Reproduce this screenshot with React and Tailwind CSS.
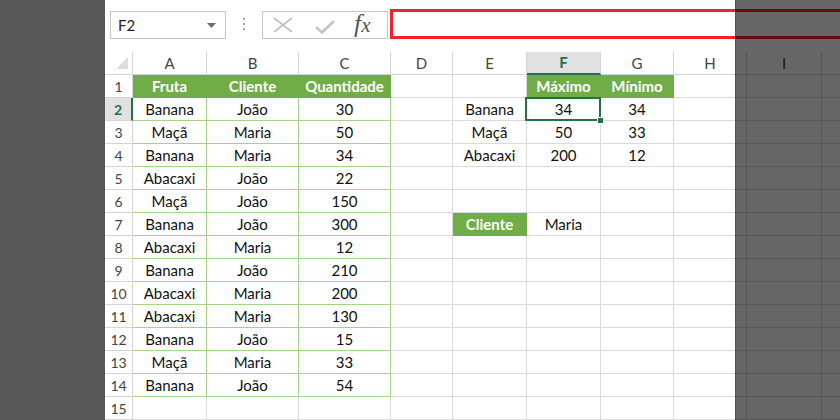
import React from "react";

const letters = ["A", "B", "C", "D", "E", "F", "G", "H", "I", "J"];

const vendas = [
  ["Banana", "João", 30],
  ["Maçã", "Maria", 50],
  ["Banana", "Maria", 34],
  ["Abacaxi", "João", 22],
  ["Maçã", "João", 150],
  ["Banana", "João", 300],
  ["Abacaxi", "Maria", 12],
  ["Banana", "João", 210],
  ["Abacaxi", "Maria", 200],
  ["Abacaxi", "Maria", 130],
  ["Banana", "João", 15],
  ["Maçã", "Maria", 33],
  ["Banana", "João", 54],
];

const resumo = [
  ["Banana", 34, 34],
  ["Maçã", 50, 33],
  ["Abacaxi", 200, 12],
];

const plainCls =
  "flex items-center justify-center border-r border-b border-[#dadada] text-[15px] text-[#111]";
const headCls =
  "flex items-center justify-center border-r border-b border-[#70ad47] bg-[#70ad47] text-[15px] font-bold text-white";
const tableCls =
  "flex items-center justify-center border-r border-b border-[#a6d18a] text-[15px] text-[#111]";

// returns [kind, value] for a sheet cell (row is 1-based, col is 0-based A..J)
function cellAt(row, col) {
  if (row === 1 && col < 3) return ["head", ["Fruta", "Cliente", "Quantidade"][col]];
  if (row === 1 && col === 5) return ["head", "Máximo"];
  if (row === 1 && col === 6) return ["head", "Mínimo"];
  if (row >= 2 && row <= 14 && col < 3) return ["table", vendas[row - 2][col]];
  if (row >= 2 && row <= 4 && col >= 4 && col <= 6) return ["plain", resumo[row - 2][col - 4]];
  if (row === 7 && col === 4) return ["head", "Cliente"];
  if (row === 7 && col === 5) return ["plain", "Maria"];
  return ["plain", ""];
}

function Cell({ row, col }) {
  const [kind, value] = cellAt(row, col);
  const cls = kind === "head" ? headCls : kind === "table" ? tableCls : plainCls;
  const selected = row === 2 && col === 5;
  return (
    <div className={selected ? plainCls + " relative" : cls}>
      {value}
      {selected && (
        <>
          <span className="absolute -left-[2px] -top-[1px] -right-[1px] -bottom-[1px] border-2 border-[#217346]" />
          <span className="absolute -right-[4px] -bottom-[4px] w-[7px] h-[7px] bg-[#217346] border border-white" />
        </>
      )}
    </div>
  );
}

function FormulaBar() {
  return (
    <div className="flex items-start h-[52px] pt-[9px]">
      {/* name box */}
      <div className="ml-[5px] mt-[2px] w-[116px] h-[28px] border border-[#c6c6c6] flex items-center justify-between pl-[7px] pr-[9px] text-[15px] text-[#222]">
        <span>F2</span>
        <svg width="9" height="5" viewBox="0 0 9 5">
          <polygon points="0,0 9,0 4.5,5" fill="#6a6a6a" />
        </svg>
      </div>
      <div className="w-[36px] h-[30px] flex flex-col items-center justify-center gap-[3px]">
        <span className="w-[2px] h-[2px] bg-[#a8a8a8]" />
        <span className="w-[2px] h-[2px] bg-[#a8a8a8]" />
        <span className="w-[2px] h-[2px] bg-[#a8a8a8]" />
      </div>
      {/* cancel / enter / insert function */}
      <div className="mt-[2px] w-[126px] h-[28px] border border-[#c6c6c6] flex items-center pl-[9px]">
        <svg width="22" height="16" viewBox="0 0 22 16">
          <path d="M2 1 L20 15 M20 1 L2 15" stroke="#c4c4c4" strokeWidth="2" fill="none" />
        </svg>
        <svg width="22" height="14" viewBox="0 0 22 14" className="ml-[20px] mt-[4px]">
          <path d="M2 7 L8 12.5 L20 1" stroke="#c4c4c4" strokeWidth="2.6" fill="none" />
        </svg>
        <span className="ml-[18px] font-['Liberation_Serif',serif] italic text-[26px] leading-none text-[#555] -mt-[3px]">
          f<span className="text-[21px]">x</span>
        </span>
      </div>
      {/* formula input */}
      <div className="ml-[2px] flex-1 h-[30px] border-[3px] border-r-0 border-[#f0232c] bg-white" />
    </div>
  );
}

export default function App() {
  const rows = Array.from({ length: 15 }, (_, i) => i + 1);
  return (
    <div className="relative flex w-[840px] h-[420px] overflow-hidden bg-white font-['Lato',sans-serif]">
      <div className="w-[105px] shrink-0 h-full bg-[#575757]" />

      <div className="w-[735px] shrink-0 flex flex-col bg-white">
        <FormulaBar />

        <div className="grid grid-cols-[28px_74px_92px_92px_62px_74px_74px_73px_73px_75px_75px] auto-rows-[23px]">
          {/* corner */}
          <div className="border-r border-b border-[#d4d4d4] flex items-end justify-end pr-[4px] pb-[5px]">
            <svg width="12" height="12" viewBox="0 0 12 12">
              <polygon points="12,0 12,12 0,12" fill="#dcdcdc" />
            </svg>
          </div>
          {letters.map((l) =>
            l === "F" ? (
              <div
                key={l}
                className="flex items-center justify-center border-r border-[#d4d4d4] border-b-2 border-b-[#217346] bg-[#e1e1e1] text-[15px] font-bold text-[#217346]"
              >
                {l}
              </div>
            ) : (
              <div
                key={l}
                className="flex items-center justify-center border-r border-b border-[#d4d4d4] text-[15px] text-[#444]"
              >
                {/* J sits past the window edge, only its gridline shows */}
                {l === "J" ? "" : l}
              </div>
            )
          )}

          {rows.map((r) => (
            <React.Fragment key={r}>
              {r === 2 ? (
                <div className="flex items-center justify-center border-b border-[#d4d4d4] border-r-2 border-r-[#217346] bg-[#e1e1e1] text-[14px] font-bold text-[#217346]">
                  {r}
                </div>
              ) : (
                <div className="flex items-center justify-center border-r border-b border-[#d4d4d4] text-[14px] text-[#444]">
                  {r}
                </div>
              )}
              {letters.map((l, c) => (
                <Cell key={l} row={r} col={c} />
              ))}
            </React.Fragment>
          ))}
        </div>
      </div>

      {/* dimmed right edge */}
      <div className="absolute left-[735px] top-0 right-0 bottom-0 bg-black/60 border-l border-black/20" />
    </div>
  );
}
